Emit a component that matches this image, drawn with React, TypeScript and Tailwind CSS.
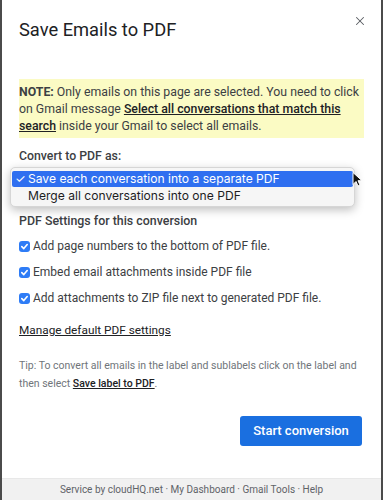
import React from 'react';
import { X } from 'lucide-react';

const options = [
  'Add page numbers to the bottom of PDF file.',
  'Embed email attachments inside PDF file',
  'Add attachments to ZIP file next to generated PDF file.',
];

const CheckBox: React.FC = () => (
  <span className="w-[11px] h-[11px] rounded-[3px] bg-[#2e7cf6] flex items-center justify-center shrink-0">
    <svg width="9" height="9" viewBox="0 0 10 10" fill="none">
      <path d="M2 5.2 4.2 7.3 8 2.8" stroke="#fff" strokeWidth="1.8" strokeLinecap="round" strokeLinejoin="round" />
    </svg>
  </span>
);

export default function App() {
  return (
    <div
      className="w-[383px] h-[500px] bg-white border-x-2 border-[#4b4b4b] flex flex-col text-[#202124] overflow-hidden"
      style={{ fontFamily: 'Roboto, "Liberation Sans", sans-serif' }}
    >
      <div className="flex-1 px-[17px] relative">
        <X className="absolute right-[14px] top-[14px] w-[14px] h-[14px] text-[#5a5e63]" strokeWidth={1.8} />
        <h1 className="pt-[18px] text-[18.3px] leading-[24px] font-normal">Save Emails to PDF</h1>

        <div className="mt-[37px] bg-[#fbfbc4] pt-[5px] pb-[3px] text-[12.3px] leading-[17px] text-[#3c4043]">
          <b className="font-bold">NOTE:</b> Only emails on this page are selected. You need to click on Gmail
          message <span className="underline font-medium text-[#202124]">Select all conversations that match this search</span>{' '}
          inside your Gmail to select all emails.
        </div>

        <div className="mt-[10px] text-[12.3px] leading-[17px] font-medium text-[#3c4043]">Convert to PDF as:</div>

        <div className="relative mt-[2px] -ml-[9px] w-[345px] h-[40px] rounded-[5px] border border-[#d6d6d6] bg-[#f6f6f6] shadow-[0_3px_10px_rgba(0,0,0,0.25)] px-[1px] pt-[3px] text-[12.1px]" style={{ fontFamily: 'Inter, Roboto, sans-serif' }}>
          <div className="h-[16px] bg-[#2f6ff0] rounded-[2px] text-white flex items-center leading-[16px]">
            <span className="w-[16px] pl-[3px] text-[12px]">✓</span>
            <span>Save each conversation into a separate PDF</span>
          </div>
          <div className="h-[17px] flex items-center pl-[16px] text-[#1d1d1f] leading-[17px]">
            Merge all conversations into one PDF
          </div>
          <svg className="absolute -right-[9px] top-[3px]" width="12" height="18" viewBox="0 0 12 18">
            <path d="M2 1.5v12l3-3 2 4.5 2-1-2-4.3h4z" fill="#111" stroke="#fff" strokeWidth="1" strokeLinejoin="round" />
          </svg>
        </div>

        <div className="mt-[5px] text-[12.4px] leading-[17px] font-medium text-[#3c4043]">PDF Settings for this conversion</div>

        <div className="mt-[9px] flex flex-col gap-[9px]">
          {options.map((o) => (
            <label key={o} className="flex items-center gap-[3px] text-[12px] leading-[17px] text-[#3c4043]">
              <CheckBox />
              {o}
            </label>
          ))}
        </div>

        <div className="mt-[15px] text-[11.8px] leading-[17px] underline text-[#202124]">Manage default PDF settings</div>

        <p className="mt-[18px] text-[10.5px] leading-[18px] text-[#70757a]">
          Tip: To convert all emails in the label and sublabels click on the label and then select{' '}
          <span className="underline text-[#202124] font-medium">Save label to PDF</span>.
        </p>

        <div className="mt-[23px] flex justify-end pr-[2px]">
          <button className="w-[122px] h-[30px] rounded-[3px] bg-[#1a6fe0] text-white text-[13px] font-medium">
            Start conversion
          </button>
        </div>
      </div>

      <div className="h-[22px] bg-[#f1f1f1] border-t border-[#e8e8e8] flex items-center justify-center text-[10px] text-[#5f6368]">
        Service by cloudHQ.net · My Dashboard · Gmail Tools · Help
      </div>
    </div>
  );
}
